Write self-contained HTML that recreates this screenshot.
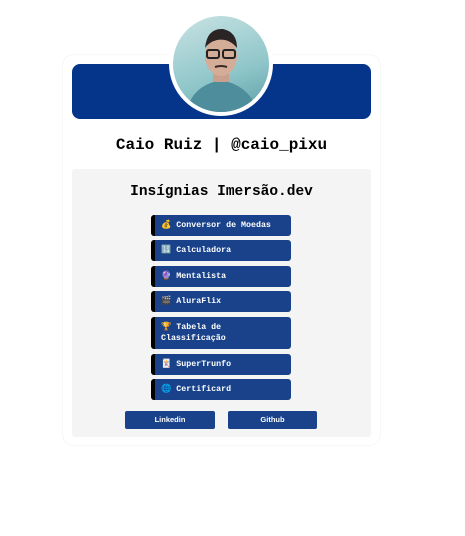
<!DOCTYPE html>
<html><head><meta charset="utf-8"><style>
body{margin:0;width:465px;height:536px;background:#fff;position:relative;font-family:"Liberation Mono",monospace;overflow:hidden}
.card{position:absolute;left:63px;top:55px;width:317px;height:390px;border-radius:10px;box-shadow:0 0 1px rgba(0,0,0,.2)}
.head{position:absolute;left:72px;top:64px;width:299px;height:55px;background:#04358a;border-radius:8px}
.av{position:absolute;left:169px;top:12px;width:96px;height:96px;border-radius:50%;border:4px solid #fff;overflow:hidden;background:linear-gradient(160deg,#c9e3e4,#8fc6c9 60%,#5d9ea8)}
.name{position:absolute;left:0;width:443px;top:136px;text-align:center;font-weight:bold;font-size:16px}
.box{position:absolute;left:72px;top:169px;width:299px;height:268px;background:#f4f4f4;border-radius:3px}
.title{position:absolute;left:72px;width:299px;top:184px;text-align:center;font-weight:bold;font-size:14.5px}
.b{position:absolute;left:151px;height:21px;background:#1a428b;border-left:4px solid #000;border-radius:3px;color:#fff;font-size:8.3px;font-weight:bold;line-height:21px;padding-left:6px;box-sizing:border-box;width:140px}
.l{position:absolute;top:411px;height:18px;background:#1a428b;border-radius:2px;color:#fff;font-size:7.5px;font-weight:bold;text-align:center;line-height:17px;font-family:"Liberation Sans",sans-serif}
</style></head><body>
<div class="card"></div>
<div class="head"></div>
<div class="av"><svg width="96" height="96" viewBox="0 0 96 96">
<path d="M14 96 Q18 70 48 64 Q78 70 84 96Z" fill="#4e8e9c"/>
<rect x="40" y="52" width="16" height="14" fill="#c9a08e"/>
<ellipse cx="48" cy="40" rx="16" ry="20" fill="#d4ad98"/>
<path d="M32 32 Q34 12 50 13 Q64 16 64 32 Q56 22 44 24 Q36 26 32 32Z" fill="#2a2424"/>
<rect x="34" y="34" width="12" height="8" rx="2" fill="none" stroke="#222" stroke-width="2"/>
<rect x="50" y="34" width="12" height="8" rx="2" fill="none" stroke="#222" stroke-width="2"/>
<path d="M42 51 Q48 49 54 51" stroke="#3a2a24" stroke-width="2" fill="none"/>
</svg></div>
<div class="name">Caio Ruiz | @caio_pixu</div>
<div class="box"></div>
<div class="title">Insígnias Imersão.dev</div>
<div class="b" style="top:215px">💰 Conversor de Moedas</div>
<div class="b" style="top:240px">🔢 Calculadora</div>
<div class="b" style="top:266px">🔮 Mentalista</div>
<div class="b" style="top:291px">🎬 AluraFlix</div>
<div class="b" style="top:317px;height:32px;line-height:11px;padding-top:5px">🏆 Tabela de<br>Classificação</div>
<div class="b" style="top:354px">🃏 SuperTrunfo</div>
<div class="b" style="top:379px">🌐 Certificard</div>
<div class="l" style="left:125px;width:90px">Linkedin</div>
<div class="l" style="left:228px;width:89px">Github</div>
</body></html>
